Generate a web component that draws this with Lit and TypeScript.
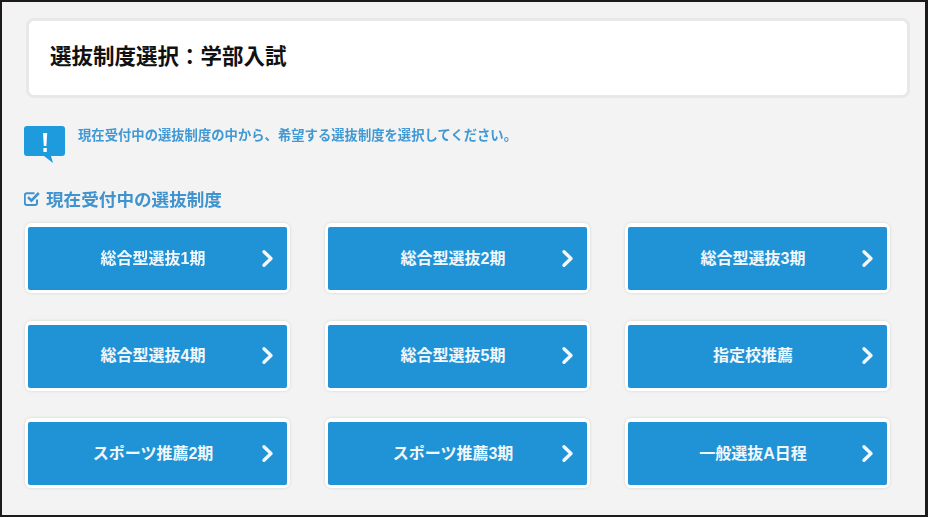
import { LitElement, html, css } from "lit";
import { customElement } from "lit/decorators.js";

const ITEMS = [
  "総合型選抜1期", "総合型選抜2期", "総合型選抜3期",
  "総合型選抜4期", "総合型選抜5期", "指定校推薦",
  "スポーツ推薦2期", "スポーツ推薦3期", "一般選抜A日程",
];

@customElement("app-root")
export class AppRoot extends LitElement {
  static styles = css`
    :host {
      display: block;
      width: 930px;
      height: 518px;
      background: #fff;
      overflow: hidden;
      font-family: "Liberation Sans", "Noto Sans CJK JP", sans-serif;
    }
    .frame {
      box-sizing: border-box;
      width: 928px;
      height: 517px;
      border: solid #1d1a19;
      border-width: 2px 3px 2px 2px;
      background: #f3f3f3;
      padding: 16px 15px 0 22px;
    }
    .soft { filter: blur(0.45px); }
    .title {
      box-sizing: border-box;
      height: 80px;
      margin: 0 0 0 2px;
      background: #fff;
      border: 3px solid #e8e8e8;
      border-radius: 8px;
      display: flex;
      align-items: center;
      padding-left: 21px;
      padding-bottom: 8px;
      font-size: 21.5px;
      font-weight: 700;
      color: #111;
    }
    .notice {
      display: flex;
      align-items: flex-start;
      gap: 12px;
      margin-top: 28px;
      height: 37px;
    }
    .notice svg { flex: none; display: block; }
    .notice span {
      font-size: 13.33px;
      line-height: 19px;
      font-weight: 700;
      color: #4099d4;
    }
    .section {
      display: flex;
      align-items: center;
      gap: 6px;
      margin-top: 23px;
      height: 24px;
      font-size: 17.6px;
      font-weight: 700;
      color: #4193cd;
    }
    .grid {
      display: grid;
      grid-template-columns: repeat(3, 265px);
      column-gap: 35px;
      row-gap: 27.5px;
      margin-top: 13px;
      margin-left: 1px;
    }
    .btn {
      box-sizing: border-box;
      height: 70px;
      background: #fff;
      box-shadow: 0 0 3px rgba(0, 0, 0, 0.14);
      border-radius: 6px;
      padding: 4px 3px 3px;
    }
    .inner {
      height: 100%;
      background: #1f93d6;
      border-radius: 2px;
      display: grid;
      grid-template-columns: 1fr auto;
      align-items: center;
      padding: 0 13px 0 0;
      color: #f2f7fb;
      font-size: 16px;
      font-weight: 700;
    }
    .label { text-align: center; padding-left: 17px; padding-bottom: 4px; }
    .inner svg { display: block; margin-bottom: 1px; }
  `;

  render() {
    return html`
      <div class="frame">
        <div class="soft">
          <div class="title">選抜制度選択：学部入試</div>
          <div class="notice">
            <svg width="42" height="37" viewBox="0 0 42 37">
              <path d="M3 0H38a3 3 0 0 1 3 3V27a3 3 0 0 1-3 3H27L29 37L20 30H3a3 3 0 0 1-3-3V3a3 3 0 0 1 3-3Z" fill="#1e9bdc"/>
              <path d="M19 7H23.2L22.4 20H19.8Z" fill="#fff"/>
              <rect x="19.4" y="22" width="3.4" height="4" fill="#fff"/>
            </svg>
            <span>現在受付中の選抜制度の中から、希望する選抜制度を選択してください。</span>
          </div>
          <div class="section">
            <svg width="16" height="15" viewBox="0 0 16 15">
              <path d="M13 8.5V12a2 2 0 0 1-2 2H2.8a2 2 0 0 1-2-2V4.2a2 2 0 0 1 2-2H10.5" fill="none" stroke="#4193cd" stroke-width="2"/>
              <path d="M4 6.2L7.4 9.6L14.8 2" fill="none" stroke="#4193cd" stroke-width="2.6"/>
            </svg>
            <span>現在受付中の選抜制度</span>
          </div>
          <div class="grid">
            ${ITEMS.map(
              (t) => html`<div class="btn">
                <div class="inner">
                  <span class="label">${t}</span>
                  <svg width="13" height="19" viewBox="0 0 13 19">
                    <path d="M3 2.8L10 9.5L3 16.2" fill="none" stroke="#f4f8fb" stroke-width="3.4" stroke-linecap="round" stroke-linejoin="round"/>
                  </svg>
                </div>
              </div>`
            )}
          </div>
        </div>
      </div>
    `;
  }
}
